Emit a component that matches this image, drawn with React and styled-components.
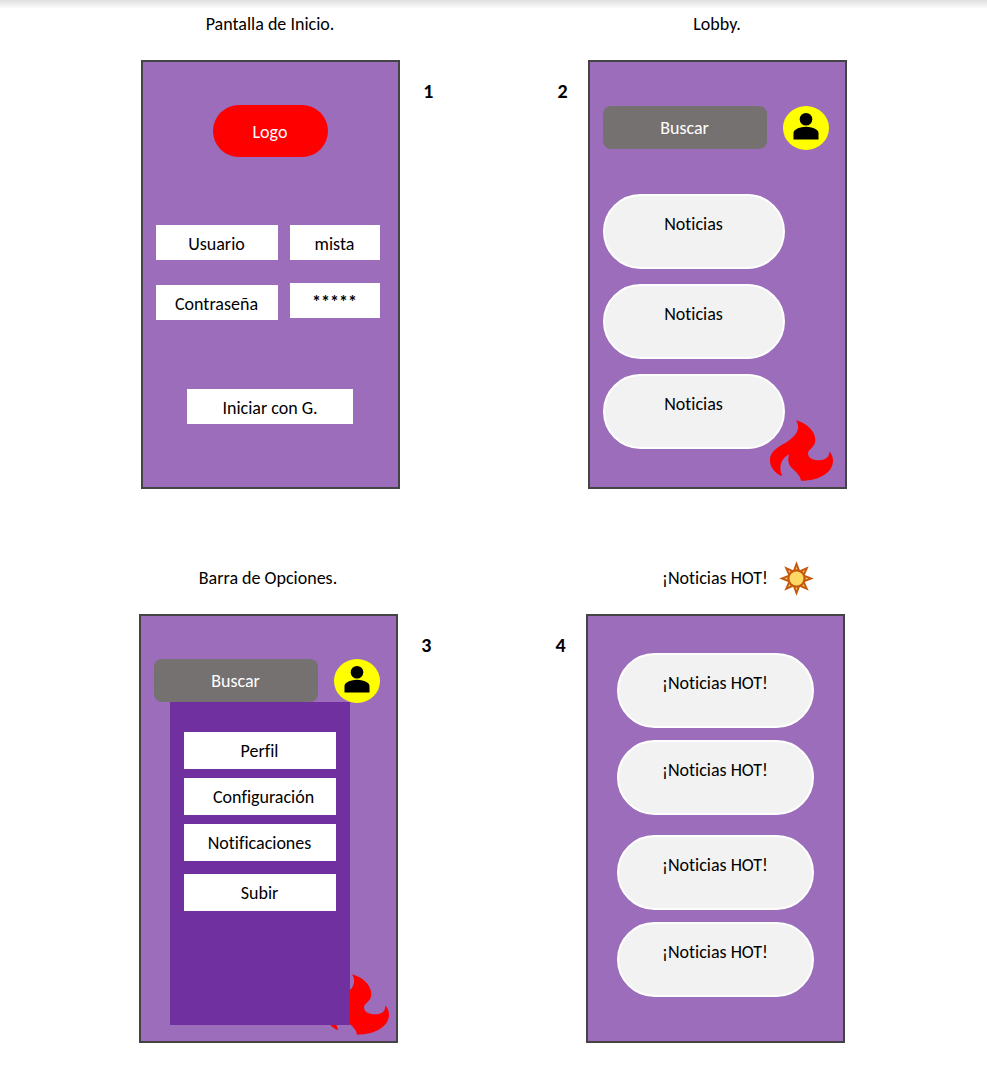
import React from "react";
import styled, { createGlobalStyle } from "styled-components";

const color = {
  screen: "#9b6dba",
  frame: "#444444",
  menu: "#7030a0",
  search: "#767171",
  pill: "#f2f2f2",
  avatar: "#ffff00",
  red: "#ff0000",
};

const GlobalStyle = createGlobalStyle`
  *, *::before, *::after { box-sizing: border-box; }
  body {
    margin: 0;
    background: #fff linear-gradient(#dedede, #fff) top / 100% 9px no-repeat;
    color: #000;
    font: 18px/20px Carlito, Calibri, Lato, sans-serif;
    font-variant-ligatures: none;
  }
  button, input { font: inherit; font-variant-ligatures: none; color: inherit; border: 0; padding: 0; margin: 0; }
`;

const Page = styled.main`
  display: flex;
  flex-direction: column;
  gap: 71px;
  padding: 6px 0 36px;
`;

const Row = styled.div`
  display: flex;
  justify-content: center;
  gap: 124px;
  padding-right: ${(p) => p.$tail || 0}px;
`;

const Mockup = styled.section`
  display: grid;
  grid-template-columns: ${(p) => (p.$numberFirst ? "30px 259px" : "259px 34px")};
  grid-template-rows: 36px 1fr;
  row-gap: 18px;
`;

const Caption = styled.h2`
  grid-column: ${(p) => (p.$second ? 2 : 1)};
  grid-row: 1;
  display: grid;
  grid-template-columns: 1fr auto 1fr;
  align-items: center;
  column-gap: 11px;
  margin: 0;
  font-size: 18px;
  font-weight: 400;

  span { grid-column: 2; }
`;

const Number = styled.strong`
  grid-column: ${(p) => (p.$first ? 1 : 2)};
  grid-row: 2;
  padding-top: 21px;
  font-size: 20px;
  text-align: ${(p) => (p.$first ? "left" : "right")};
`;

const Phone = styled.div`
  grid-column: ${(p) => (p.$second ? 2 : 1)};
  grid-row: 2;
  position: relative;
  isolation: isolate;
  display: flex;
  flex-direction: column;
  padding: ${(p) => p.$padding};
  border: 2px solid ${color.frame};
  background: ${color.screen};
`;

const Logo = styled.div`
  align-self: center;
  width: 115px;
  padding: 17px 0 15px;
  border-radius: 26px;
  background: ${color.red};
  color: #fff;
  text-align: center;
`;

const LoginForm = styled.form`
  display: flex;
  flex-direction: column;
  margin-top: 68px;
`;

const Fields = styled.div`
  display: flex;
  gap: 12px;
  align-items: flex-start;
`;

const FieldColumn = styled.div`
  display: flex;
  flex-direction: column;
  gap: ${(p) => p.$gap}px;
  width: ${(p) => p.$width}px;
`;

const FieldLabel = styled.label`
  padding: 9px 0 6px;
  background: #fff;
  text-align: center;
`;

const FieldInput = styled.input`
  width: 100%;
  height: 35px;
  padding-top: 3px;
  background: #fff;
  font-weight: ${(p) => (p.$masked ? 700 : 400)};
  text-align: center;
`;

const LoginButton = styled.button`
  align-self: center;
  width: 166px;
  margin-top: 69px;
  padding: 9px 0 6px;
  background: #fff;
`;

const Header = styled.header`
  display: flex;
  align-items: center;
  gap: 16px;
  height: 43px;
`;

const Search = styled.input`
  width: 164px;
  height: 43px;
  border-radius: 8px;
  background: ${color.search};
  text-align: center;
  appearance: none;

  &::placeholder { color: #fff; opacity: 1; }
`;

const Avatar = styled.button`
  display: flex;
  justify-content: center;
  width: 46px;
  height: 44px;
  padding-top: 6px;
  border-radius: 50%;
  background: ${color.avatar};

  svg { display: block; }
`;

const News = styled.div`
  display: flex;
  flex-direction: column;
  gap: ${(p) => p.$gap}px;
  margin-top: ${(p) => p.$top || 0}px;
`;

const NewsPill = styled.article`
  width: ${(p) => p.$width}px;
  padding: 18px 0 33px;
  border: 2px solid #fff;
  border-radius: 38px;
  background: ${color.pill};
  text-align: center;
`;

const FlameButton = styled.button`
  position: absolute;
  z-index: -1;
  right: ${(p) => p.$right}px;
  bottom: 6px;
  background: none;

  svg { display: block; }
`;

const Menu = styled.nav`
  display: flex;
  flex-direction: column;
  gap: 13px;
  width: 180px;
  margin-left: 16px;
  padding: 30px 14px 114px;
  background: ${color.menu};
`;

const MenuGroup = styled.div`
  display: flex;
  flex-direction: column;
  gap: 9px;
`;

const MenuItem = styled.button`
  padding: 9px 0 8px;
  background: #fff;
`;

function PersonIcon() {
  return (
    <svg width="26" height="28" viewBox="0 0 26 28" aria-hidden="true">
      <circle cx="13" cy="7.2" r="6.3" />
      <path d="M.5 27.5V21.2C.5 19.6 1.4 18.3 2.8 17.5C5.5 15.8 9.4 14.8 13 14.8S20.5 15.8 23.2 17.5C24.6 18.3 25.5 19.6 25.5 21.2V27.5Z" />
    </svg>
  );
}

function FlameIcon() {
  return (
    <svg width="63" height="61" viewBox="90 59 189 183" aria-hidden="true">
      <path
        fill={color.red}
        d="M168 60C197 68 226 90 226 119C226 142 204 146 204 159C204 173 218 180 236 180C255 180 269 172 268 153C276 162 279 172 279 181C279 215 240 241 183 241C180 223 166 214 156 204C144 192 143 178 147 162C128 172 112 196 127 228C104 219 90 200 90 180C90 146 126 137 149 119C174 101 181 80 168 60Z"
      />
    </svg>
  );
}

function SunIcon() {
  return (
    <svg width="35" height="35" viewBox="-17.5 -17.5 35 35" aria-hidden="true">
      <circle r="8.8" fill="#c55a11" />
      {[0, 45, 90, 135, 180, 225, 270, 315].map((angle) => (
        <g key={angle} transform={`rotate(${angle})`}>
          <path fill="#c55a11" d="M-3.9 -7L0 -17.3L3.9 -7Z" />
          <path fill="#ffd966" d="M-.9 -9.2L0 -11.8L.9 -9.2Z" />
        </g>
      ))}
      <circle r="7" fill="#ffd966" />
    </svg>
  );
}

function SearchHeader() {
  return (
    <Header>
      <Search type="text" placeholder="Buscar" aria-label="Buscar" />
      <Avatar type="button" aria-label="Perfil">
        <PersonIcon />
      </Avatar>
    </Header>
  );
}

export default function App() {
  return (
    <>
      <GlobalStyle />
      <Page>
        <Row>
          <Mockup>
            <Caption><span>Pantalla de Inicio.</span></Caption>
            <Phone $padding="43px 13px 62px">
              <Logo>Logo</Logo>
              <LoginForm>
                <Fields>
                  <FieldColumn $width={122} $gap={25}>
                    <FieldLabel htmlFor="user">Usuario</FieldLabel>
                    <FieldLabel htmlFor="pass">Contraseña</FieldLabel>
                  </FieldColumn>
                  <FieldColumn $width={90} $gap={23}>
                    <FieldInput id="user" type="text" defaultValue="mista" />
                    <FieldInput id="pass" type="text" $masked defaultValue="*****" />
                  </FieldColumn>
                </Fields>
                <LoginButton type="button">Iniciar con G.</LoginButton>
              </LoginForm>
            </Phone>
            <Number>1</Number>
          </Mockup>

          <Mockup $numberFirst>
            <Caption $second><span>Lobby.</span></Caption>
            <Number $first>2</Number>
            <Phone $second $padding="44px 13px 38px">
              <SearchHeader />
              <News $gap={15} $top={45}>
                <NewsPill $width={182}>Noticias</NewsPill>
                <NewsPill $width={182}>Noticias</NewsPill>
                <NewsPill $width={182}>Noticias</NewsPill>
              </News>
              <FlameButton type="button" aria-label="Noticias HOT" $right={12}>
                <FlameIcon />
              </FlameButton>
            </Phone>
          </Mockup>
        </Row>

        <Row $tail={4}>
          <Mockup>
            <Caption><span>Barra de Opciones.</span></Caption>
            <Phone $padding="43px 13px 16px">
              <SearchHeader />
              <Menu aria-label="Opciones">
                <MenuGroup>
                  <MenuItem type="button">Perfil</MenuItem>
                  <MenuItem type="button">{"\u00a0\u00a0"}Configuración</MenuItem>
                  <MenuItem type="button">Notificaciones</MenuItem>
                </MenuGroup>
                <MenuGroup>
                  <MenuItem type="button">Subir</MenuItem>
                </MenuGroup>
              </Menu>
              <FlameButton type="button" aria-label="Noticias HOT" $right={7}>
                <FlameIcon />
              </FlameButton>
            </Phone>
            <Number>3</Number>
          </Mockup>

          <Mockup $numberFirst>
            <Caption $second>
              <span>¡Noticias HOT!</span>
              <SunIcon />
            </Caption>
            <Number $first>4</Number>
            <Phone $second $padding="37px 29px 44px">
              <News $gap={20}>
                <News $gap={12}>
                  <NewsPill $width={197}>¡Noticias HOT!</NewsPill>
                  <NewsPill $width={197}>¡Noticias HOT!</NewsPill>
                </News>
                <News $gap={12}>
                  <NewsPill $width={197}>¡Noticias HOT!</NewsPill>
                  <NewsPill $width={197}>¡Noticias HOT!</NewsPill>
                </News>
              </News>
            </Phone>
          </Mockup>
        </Row>
      </Page>
    </>
  );
}
